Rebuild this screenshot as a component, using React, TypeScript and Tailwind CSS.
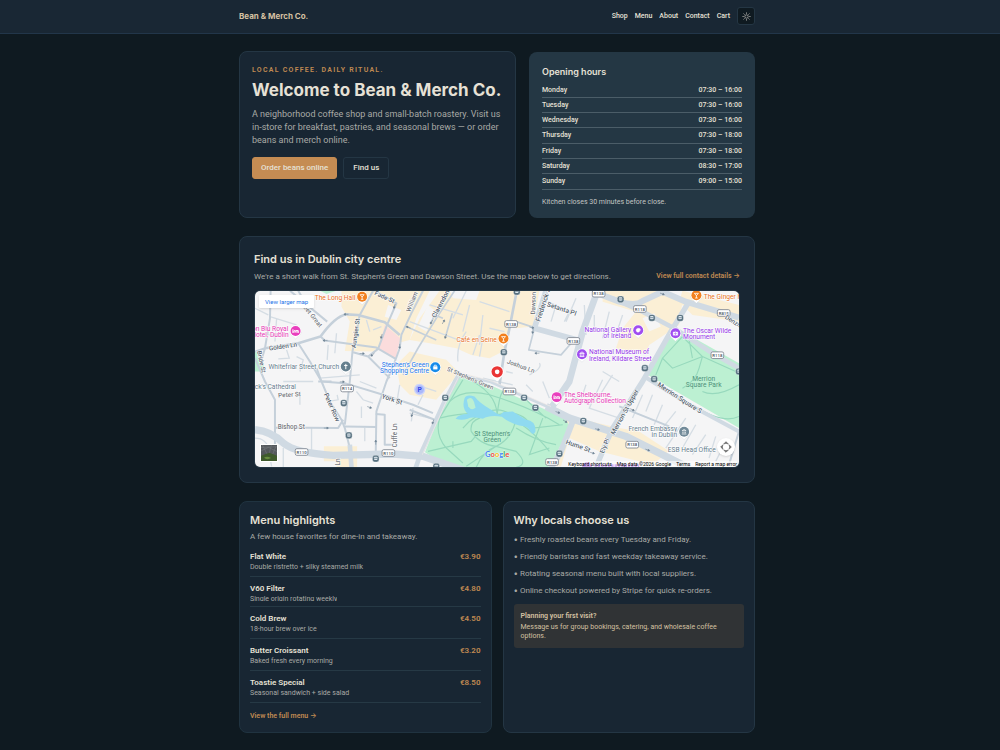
import * as React from "react";

const NAV = ["Shop", "Menu", "About", "Contact", "Cart"];

const HOURS = [
  ["Monday", "07:30 – 16:00"],
  ["Tuesday", "07:30 – 16:00"],
  ["Wednesday", "07:30 – 16:00"],
  ["Thursday", "07:30 – 18:00"],
  ["Friday", "07:30 – 18:00"],
  ["Saturday", "08:30 – 17:00"],
  ["Sunday", "09:00 – 15:00"],
];

const MENU = [
  { name: "Flat White", note: "Double ristretto + silky steamed milk", price: "€3.90" },
  { name: "V60 Filter", note: "Single origin rotating weekly", price: "€4.80", short: true },
  { name: "Cold Brew", note: "18-hour brew over ice", price: "€4.50" },
  { name: "Butter Croissant", note: "Baked fresh every morning", price: "€3.20" },
  { name: "Toastie Special", note: "Seasonal sandwich + side salad", price: "€8.50" },
];

const REASONS = [
  "Freshly roasted beans every Tuesday and Friday.",
  "Friendly baristas and fast weekday takeaway service.",
  "Rotating seasonal menu built with local suppliers.",
  "Online checkout powered by Stripe for quick re-orders.",
];

const SHIELDS: [number, number, string][] = [
  [292, 311, "R114"],
  [155, 502, "R110"],
  [416, 505, "R110"],
  [785, 117, "R138"],
  [972, 168, "R138"],
  [1048, 26, "R138"],
  [1172, 72, "R118"],
  [1424, 84, "R815"],
  [1405, 211, "R118"],
  [780, 320, "R138"],
  [908, 532, "R138"],
  [1149, 480, "R138"],
];

const STOPS = [
  [282, 355], [297, 452], [378, 522], [802, 20], [763, 202], [1114, 43], [1208, 99], [1293, 99],
  [1187, 250], [1215, 283], [587, 339], [824, 339], [858, 369], [1002, 409], [930, 507], [560, 546], [1470, 260],
];

const ARROWS = [
  [288, 88, 180], [225, 167, 180], [338, 206, 0], [434, 65, 105], [395, 155, 105], [450, 185, 90],
  [475, 127, 200], [582, 110, 300], [588, 155, 110], [545, 112, 120], [278, 291, 0], [360, 368, 20],
  [230, 430, 0], [378, 472, 270], [368, 210, 140], [848, 128, 10], [850, 140, 100], [862, 205, 180],
  [926, 383, 20], [948, 410, 30], [1045, 434, 15], [1150, 375, 25], [1030, 505, 15], [1196, 496, 20],
  [550, 412, 110], [487, 390, 110], [1240, 27, 20],
];

type PinProps = { x: number; y: number; color: string; children?: React.ReactNode };

function Pin({ x, y, color, children }: PinProps) {
  return (
    <g transform={`translate(${x} ${y})`}>
      <path d="M-17 3 C-16 13 -6 17 0 24 C6 17 16 13 17 3Z" fill="#fff" stroke="#c9ced4" />
      <circle r="17" fill="#fff" />
      <circle r="15" fill={color} />
      <g fill="none" stroke="#fff" strokeWidth="2.4">
        {children}
      </g>
    </g>
  );
}

const cocktail = <path d="M-6 -6 H6 L0 1Z M0 0 V8 M-4 8 H4" />;
const bed = <path d="M-8 -5 V6 M-8 3 H8 V6 M8 3 V-1 H0 V2 M-5 -1 H-2" strokeWidth="3" />;

function DublinMap() {
  return (
    <svg
      viewBox="15 17 1455 531"
      preserveAspectRatio="xMidYMid slice"
      className="block h-full w-full"
      role="img"
      aria-label="Map of St. Stephen's Green"
    >
      <rect x="0" y="0" width="1500" height="570" fill="#f5f5f6" />

      {/* shopping areas */}
      <g fill="#fbefd5">
        <path d="M275 17 H540 L500 100 L480 165 L380 190 L372 200 L285 198 L300 110 L275 65Z" />
        <path d="M570 17 H870 L850 125 L800 130 L790 100 L760 200 L720 220 L665 210 L620 190 L540 175 L480 165 L510 100Z" />
        <path d="M480 200 L590 225 L620 255 L615 280 L560 345 L480 330 L450 300 L440 240Z" />
        <path d="M1060 17 H1250 L1300 50 L1290 120 L1200 180 L1190 205 L1100 190 L1120 130 L1160 80 L1060 50Z" />
        <path d="M1300 17 L1470 60 V110 L1330 90 L1290 50Z" />
        <path d="M925 370 L960 395 L1110 430 L1170 440 L1260 500 L1210 540 L1050 500 L960 460 L935 545 H920 L960 425Z" />
        <path d="M222 485 H322 V548 H260 V530 H222Z" />
      </g>
      <g fill="#f5f5f6">
        <path d="M600 17 H690 L680 45 L610 40Z M415 60 L455 75 L440 105 L405 95Z M535 60 L560 80 L530 140 L505 125Z M640 220 h70 v40 h-60z" />
        <path d="M1180 100 L1215 85 L1235 125 L1200 140Z" />
      </g>
      <path d="M405 120 L452 160 L438 222 L387 190Z" fill="#fbdcdc" />

      {/* parks */}
      <g fill="#bcf0d2">
        <path d="M612 285 Q622 272 645 273 L720 300 L945 400 L962 425 L925 500 L895 550 H600 L526 503Z" />
        <path d="M1265 145 L1300 140 L1470 235 V430 L1195 270Z" />
        <path d="M15 200 h12 l20 60 h-32z M210 17 h50 l-30 10z" />
      </g>
      <g fill="none" stroke="#97d9bd" strokeWidth="3.5">
        <path d="M640 285 L570 400 Q555 450 590 490 L640 535 M650 280 Q740 320 743 390 Q750 330 760 320 M570 400 Q640 380 743 388 Q820 400 900 500" />
        <path d="M690 400 Q740 350 800 400 Q790 460 740 485 Q690 480 665 440 Q660 410 690 400Z M640 430 Q690 370 743 390 Q820 370 850 430 L940 420 M535 500 L665 470 L690 440 M800 430 Q860 470 920 480" />
        <path d="M600 350 Q640 310 720 330 Q850 370 930 420 M650 545 L740 485 L800 500 Q840 540 800 548 M680 548 Q700 500 740 485 M880 400 L840 510 L900 490 M830 345 L890 400 M610 470 V490" />
        <path d="M1300 155 L1240 220 L1270 250 L1360 215 L1300 155 M1360 215 L1350 250 Q1340 290 1300 310 M1360 215 L1460 260 M1240 220 L1220 270 M1330 360 Q1420 420 1470 395 M1360 320 Q1400 340 1470 300 M1320 165 L1330 220" />
      </g>
      <path
        d="M645 340 Q650 328 675 335 Q690 355 725 375 L742 386 L752 390 L762 382 L790 380 L830 405 Q860 408 858 440 Q852 455 842 440 Q840 425 810 422 Q780 415 757 396 Q720 390 700 402 Q665 395 655 402 Q635 408 618 402 Q628 388 655 388 Q635 370 645 340Z"
        fill="#8fdaf0"
      />
      <path d="M652 345 q14 -14 22 8 l4 16 q-12 10 -22 -4z" fill="#bcf0d2" />

      {/* lanes */}
      <g fill="none" stroke="#d5dde4" strokeWidth="4">
        <path d="M15 70 L55 90 M60 95 L140 120 M15 150 L80 150 M80 100 L75 170 M110 195 L118 220 L85 222 M140 215 L160 225 L150 260 M260 145 L255 205 M235 180 L232 225 M350 105 L360 140 M395 125 L370 135" />
        <path d="M650 17 L610 100 M690 50 L780 80 M660 60 L640 140 M700 90 L690 180 M720 130 L765 140 M670 210 L690 150 M690 215 L700 160 M625 230 Q620 180 650 140 M480 110 L640 170 M540 60 L640 90" />
        <path d="M895 50 L960 80 L945 110 M920 60 L905 110 M980 40 L950 110 M1005 60 L1010 150 M870 235 Q880 250 840 270 M1080 80 L1060 160 M1120 90 L1100 150 M1035 90 V130" />
        <path d="M960 330 L1020 360 M1010 300 L990 360 M1040 350 L1090 270 M1060 260 L1110 290 M1060 285 L1020 370 L1110 400 M1180 330 L1150 400 M1210 330 L1190 380 M1240 360 L1215 420 M1280 380 L1240 430 M1310 400 L1250 490 M1340 420 L1300 490 M1370 450 L1330 510 M1400 455 L1380 520 M1430 470 L1400 530" />
        <path d="M100 290 H190 M150 320 V360 M210 280 L330 270 M330 290 L380 310 M320 320 L340 345 L370 355 M335 365 V400 M235 350 L265 345 L262 330 M185 430 V500 M345 430 V470 M60 520 L65 545 M100 490 V548 M15 460 Q50 460 60 500" />
        <path d="M450 300 L440 360 M480 385 L540 400 M490 370 L485 410 M500 300 L560 320 M520 330 L505 360 M700 280 L790 300 M770 260 L790 265 M830 300 L850 320 M880 290 L900 340" />
      </g>

      {/* streets */}
      <g fill="none" stroke="#c5d0da" strokeWidth="6" strokeLinejoin="round">
        <path d="M62 17 L60 100 L45 190 L15 200 M45 190 L30 240 M120 17 L232 110 M145 17 L170 60" />
        <path d="M45 190 L145 175 L212 155 Q255 95 290 88 L325 90 L405 112 L450 150" strokeWidth="8" />
        <path d="M212 155 L225 167 L380 188 L438 222 M370 17 L330 90 L308 200 L300 290 L285 420" />
        <path d="M375 17 L440 55 L412 120 L385 192 L355 215 L310 202 M355 215 L420 280 M520 17 L485 85 L455 150 L450 190 L430 245 L410 290 L380 380 L378 505" />
        <path d="M145 175 L180 230 L215 290 L240 350 L275 405 L285 430 L300 490" />
        <path d="M615 17 L560 100 L505 190 L460 270 M470 125 L560 165 M545 112 L555 90 L580 100 M608 85 L588 155" strokeWidth="5" />
        <path d="M15 220 L45 290 L75 345 V490 M75 428 L265 430 L280 405 M285 425 L380 427 M215 290 L285 295 L400 330 L490 360 L550 385 M378 388 L405 390 V480 L430 480" />
        <path d="M855 130 L838 195 L935 210 L970 170 M800 110 L855 128" strokeWidth="5" />
        <path d="M802 17 L780 130 L765 200 L750 300" strokeWidth="8" />
        <path d="M480 375 L555 405 M1110 365 L1260 425 M1470 440 L1440 540 M245 290 L205 290 M215 290 L200 250" />
      </g>
      <g fill="none" stroke="#d0dae3" strokeLinejoin="round">
        <path d="M890 17 L855 130 L1000 170" strokeWidth="17" />
        <path d="M1045 17 L1000 140 L960 290 L905 370" strokeWidth="20" />
        <path d="M1045 25 L1110 50 Q1160 65 1180 48 L1240 20 L1310 50 L1470 98" strokeWidth="18" />
        <path d="M1090 40 L1180 80 L1275 130 L1390 205 L1470 250" strokeWidth="14" />
        <path d="M1320 50 L1265 140 L1180 290 L1090 430 L1040 548" strokeWidth="16" />
        <path d="M1185 275 L1330 365 L1470 440" strokeWidth="12" />
        <path d="M15 435 Q65 440 100 475 Q135 505 250 512 L430 508 L520 515 L650 560" strokeWidth="22" />
        <path d="M300 480 L305 548" strokeWidth="14" />
        <path d="M625 275 L585 350 L510 515 L498 550" strokeWidth="14" />
        <path d="M890 365 L960 400 L1130 455 L1320 550" strokeWidth="22" />
        <path d="M970 410 L935 500 L905 550" strokeWidth="18" />
        <path d="M620 268 L720 290 L905 370" strokeWidth="9" />
      </g>
      <path d="M628 275 L590 350 L518 510 M630 262 L730 290 L905 365" fill="none" stroke="#f3ece9" strokeWidth="2" />

      {ARROWS.map(([x, y, r], i) => (
        <path key={i} d="M-8 0 H4 M1 -3 L6 0 L1 3Z" transform={`translate(${x} ${y}) rotate(${r})`} fill="#6d8293" stroke="#6d8293" strokeWidth="1.6" />
      ))}

      {STOPS.map(([x, y], i) => (
        <g key={i} transform={`translate(${x} ${y})`}>
          <rect x="-10" y="-10" width="20" height="20" rx="7" fill="#56707f" stroke="#fff" strokeWidth="1" />
          <rect x="-5" y="-6" width="10" height="10" rx="2" fill="#dfe8ef" />
          <path d="M-5 -1 H5 M-3 6 V4 M3 6 V4" stroke="#56707f" strokeWidth="2" />
        </g>
      ))}

      {SHIELDS.map(([x, y, name], i) => (
        <g key={i} transform={`translate(${x} ${y})`}>
          <rect x="-19" y="-10" width="38" height="20" rx="5" fill="#fff" stroke="#7b838d" strokeWidth="2.5" />
          <text y="5" textAnchor="middle" fontSize="13" fontWeight="500" fill="#4b545f">{name}</text>
        </g>
      ))}

      {/* street names */}
      <g fontSize="19" fontWeight="500" fill="#55636f" stroke="#fff" strokeWidth="3" paintOrder="stroke" textAnchor="middle">
        <text transform="translate(184 98) rotate(51)" fill="#75797e">eet Great</text>
        <text transform="translate(100 191) rotate(-8)">Golden Ln</text>
        <text transform="translate(28 232) rotate(78)">Bride St</text>
        <text transform="translate(324 146) rotate(-82)">Aungier St</text>
        <text transform="translate(402 42) rotate(25)">Fade St</text>
        <text transform="translate(496 45) rotate(-68)" fill="#75797e">William S</text>
        <text transform="translate(583 52) rotate(-62)" fontSize="20">Clarendon S</text>
        <text transform="translate(119 336) rotate(-4)" fill="#75797e">Peter St</text>
        <text transform="translate(240 370) rotate(66)" fontSize="20">Peter Row</text>
        <text transform="translate(425 350) rotate(18)" fontSize="20">York St</text>
        <text transform="translate(124 434)" fill="#75797e">Bishop St</text>
        <text transform="translate(441 452) rotate(-90)" fill="#75797e">Cuffe Ln</text>
        <text transform="translate(272 532) rotate(-90)" fill="#75797e">Ln</text>
        <text transform="translate(858 55) rotate(-88)" fill="#75797e">Dawson</text>
        <text transform="translate(889 58) rotate(-72)" fontSize="21">Frederick St</text>
        <text transform="translate(935 78) rotate(18)" fontSize="20">Setanta Pl</text>
        <text transform="translate(812 250) rotate(20)" fill="#75797e">Joshua Ln</text>
        <text transform="translate(660 286) rotate(23)" fill="#75797e" fontSize="18">St Stephen's Green</text>
        <text transform="translate(1455 118) rotate(32)">Denzille</text>
        <text transform="translate(1288 345) rotate(33)" fontSize="20">Merrion Square S</text>
        <text transform="translate(1132 385) rotate(-61)" fontSize="20">Merrion St Upper</text>
        <text transform="translate(1072 486) rotate(-68)">Ely Pl</text>
        <text transform="translate(984 490) rotate(20)" fontSize="20">Hume St</text>
      </g>

      {/* places */}
      <g fontSize="20" stroke="#fff" strokeWidth="3" paintOrder="stroke">
        <g fill="#e8711c">
          <text x="317" y="44" textAnchor="end">The Long Hall</text>
          <text x="742" y="171" textAnchor="end">Café en Seine</text>
          <text x="1364" y="41">The Ginger Man</text>
        </g>
        <g fill="#e535b5">
          <text x="115" y="138" textAnchor="end">on Blu Royal</text>
          <text x="116" y="156" textAnchor="end">Hotel, Dublin</text>
          <text x="944" y="336">The Shelbourne,</text>
          <text x="944" y="355">Autograph Collection</text>
        </g>
        <g fill="#9334e6">
          <text x="1146" y="140" textAnchor="end">National Gallery</text>
          <text x="1146" y="159" textAnchor="end">of Ireland</text>
          <text x="1019" y="208">National Museum of</text>
          <text x="1019" y="227">Ireland, Kildare Street</text>
          <text x="1302" y="143">The Oscar Wilde</text>
          <text x="1302" y="162">Monument</text>
        </g>
        <g fill="#1a73e8">
          <text x="538" y="247" textAnchor="end">Stephen's Green</text>
          <text x="538" y="266" textAnchor="end">Shopping Centre</text>
        </g>
        <g fill="#667d8d">
          <text x="268" y="253" textAnchor="end">Whitefriar Street Church</text>
          <text x="138" y="313" textAnchor="end">St Patrick's Cathedral</text>
          <text x="1284" y="439" textAnchor="end">French Embassy</text>
          <text x="1284" y="458" textAnchor="end">in Dublin</text>
          <text x="1256" y="502">ESB Head Office</text>
        </g>
        <g fill="#4e917a" stroke="#bcf0d2" textAnchor="middle">
          <text x="728" y="453">St Stephen's</text>
          <text x="728" y="472">Green</text>
          <text x="1364" y="289">Merrion</text>
          <text x="1364" y="308">Square Park</text>
        </g>
      </g>

      <Pin x={337} y={35} color="#f2801e">{cocktail}</Pin>
      <Pin x={762} y={161} color="#f2801e">{cocktail}</Pin>
      <Pin x={1342} y={31} color="#f2801e">{cocktail}</Pin>
      <Pin x={137} y={138} color="#e93fbd">{bed}</Pin>
      <Pin x={922} y={337} color="#e93fbd">{bed}</Pin>
      <Pin x={1167} y={136} color="#a04df0"><path d="M0 -6 a6 6 0 1 0 4 10 q0 -4 3 -4 a6 6 0 0 0 -7 -6z" fill="#fff" strokeWidth="1" /></Pin>
      <Pin x={998} y={208} color="#a04df0"><path d="M-7 -2 L0 -7 L7 -2Z M-5 0 V6 M0 0 V6 M5 0 V6 M-7 7 H7" /></Pin>
      <Pin x={1279} y={145} color="#a04df0"><path d="M-7 -4 H7 V6 H-7Z M-2 -6 H2" fill="#fff" strokeWidth="1" /><circle cy="1" r="2" stroke="#a04df0" /></Pin>
      <Pin x={557} y={247} color="#168bea"><path d="M-6 -2 H6 V6 H-6Z" fill="#fff" strokeWidth="1" /><path d="M-3 -2 V-6 H3 V-2" /></Pin>
      <Pin x={288} y={245} color="#66808f"><path d="M0 -8 V8 M-5 -3 H5" strokeWidth="3" /></Pin>
      <Pin x={1305} y={441} color="#718a99"><path d="M-6 -3 H6 L0 -7Z M-4 0 V5 M0 0 V5 M4 0 V5 M-7 7 H7" strokeWidth="2" /></Pin>
      <circle cx="510" cy="314" r="17" fill="#ccd4fb" />
      <circle cx="510" cy="314" r="13" fill="#aab8fb" />
      <text x="510" y="321" textAnchor="middle" fontSize="20" fontWeight="700" fill="#3347e8">P</text>

      <path d="M725 262 Q727 276 743 290 Q759 276 762 262Z" fill="#fff" />
      <circle cx="743" cy="261" r="20" fill="#fff" />
      <circle cx="743" cy="261" r="17" fill="#ea3535" />
      <circle cx="743" cy="261" r="7" fill="#fff" />

      <path d="M998 548 a15 15 0 0 1 30 0z" fill="#8f35e6" />
      <path d="M1036 543 H1170" stroke="#8f35e6" strokeWidth="9" strokeDasharray="7 3" />

      <text x="743" y="518" textAnchor="middle" fontSize="23" fontWeight="700" stroke="#fff" strokeWidth="2" paintOrder="stroke" fontFamily="Lato, sans-serif">
        <tspan fill="#4285f4">G</tspan>
        <tspan fill="#ea4335">o</tspan>
        <tspan fill="#fbbc05">o</tspan>
        <tspan fill="#4285f4">g</tspan>
        <tspan fill="#34a853">l</tspan>
        <tspan fill="#ea4335">e</tspan>
      </text>
    </svg>
  );
}

function MapFrame() {
  return (
    <div className="relative mt-[7px] h-[178px] overflow-hidden rounded-md border border-[#243644]">
      <DublinMap />
      <a href="#map" className="absolute top-[4px] left-[4px] rounded-[1px] bg-white px-[6px] py-[2px] text-[6px] leading-[9px] text-[#1a73e8] shadow-sm">
        View larger map
      </a>
      <button aria-label="Show satellite imagery" className="absolute bottom-[5px] left-[5px] h-[18px] w-[18px] overflow-hidden border border-white">
        <svg viewBox="0 0 54 54" className="h-full w-full">
          <rect width="54" height="54" fill="#55585c" />
          <path d="M0 20 L25 8 L54 22 M5 0 L20 30 M35 0 L28 28 M50 5 L40 30 M0 8 L54 6" stroke="#74787c" strokeWidth="2" fill="none" />
          <path d="M0 36 L28 26 L54 36 V54 H0Z" fill="#3f5a2c" />
          <path d="M10 43 Q20 36 34 44 Q20 52 10 43Z" fill="#6a8f3f" />
        </svg>
      </button>
      <button aria-label="Map camera controls" className="absolute right-[4px] bottom-[11px] h-[18px] w-[18px] rounded-full bg-white shadow">
        <svg viewBox="0 0 54 54" className="h-full w-full" fill="#666" stroke="#666" strokeWidth="2">
          <path d="M20 18 L27 11 L34 18 L27 16Z M20 36 L27 43 L34 36 L27 38Z M18 20 L11 27 L18 34 L16 27Z M36 20 L43 27 L36 34 L38 27Z" />
        </svg>
      </button>
      <div className="absolute right-[2px] bottom-0 flex gap-[5px] bg-white/60 text-[5px] leading-[6px] whitespace-nowrap text-black">
        <span>Keyboard shortcuts</span>
        <span>Map data ©2026 Google</span>
        <a href="#terms">Terms</a>
        <a href="#report">Report a map error</a>
      </div>
    </div>
  );
}

function SunIcon() {
  return (
    <svg viewBox="0 0 24 24" className="h-[9px] w-[9px]" fill="none" stroke="#c9c5bd" strokeWidth="1.8">
      <circle cx="12" cy="12" r="4.5" />
      <path d="M12 1 V5 M12 19 V23 M1 12 H5 M19 12 H23 M4 4 L7 7 M17 17 L20 20 M20 4 L17 7 M4 20 L7 17" />
    </svg>
  );
}

function Arrow() {
  return <span className="font-[Inter,sans-serif] leading-none">→</span>;
}

export default function App() {
  return (
    <div className="min-h-screen bg-[#0f1a21] font-[Roboto,sans-serif] text-[#e6e1d6]">
      <header className="border-b border-[#22364a] bg-[#192734] pr-[6px]">
        <div className="mx-auto flex max-w-[516px] items-center justify-between pt-[7px] pb-[8px]">
          <a href="#home" className="font-[Inter,sans-serif] text-[8px] leading-[18px] font-bold text-[#d5c1a2]">Bean &amp; Merch Co.</a>
          <nav className="flex items-center gap-[7px] text-[7px] font-medium">
            {NAV.map((item) => (
              <a key={item} href={"#" + item.toLowerCase()}>{item}</a>
            ))}
            <button aria-label="Toggle theme" className="flex h-[18px] w-[18px] items-center justify-center rounded-[3px] border border-[#243644] bg-[#0f1a21]">
              <SunIcon />
            </button>
          </nav>
        </div>
      </header>

      <main className="pt-[17px] pr-[6px] pb-[17px]">
        <div className="mx-auto flex max-w-[516px] flex-col gap-[18px]">
          <section className="grid grid-cols-[277fr_226fr] items-center gap-[13px]">
            <div className="h-full rounded-lg border border-[#243644] bg-[#182633] px-[12px] pt-[13px] pb-[38px]">
              <p className="text-[7px] leading-[10px] font-semibold tracking-[0.18em] text-[#c08a52] uppercase">Local coffee. Daily ritual.</p>
              <h1 className="mt-[4px] font-[Inter,sans-serif] text-[17px] leading-[22px] font-bold">Welcome to Bean &amp; Merch Co.</h1>
              <p className="mt-[7px] text-[9px] leading-[13px] text-[#a9aaa6]">
                A neighborhood coffee shop and small-batch roastery. Visit us in-store for breakfast, pastries, and seasonal brews — or order beans and merch online.
              </p>
              <div className="mt-[10px] flex gap-[6px] text-[8px] leading-[20px] font-medium">
                <a href="#shop" className="rounded-[3px] border border-[#c58c53] bg-[#c58c53] px-[8px]">Order beans online</a>
                <a href="#find" className="rounded-[3px] border border-[#243644] px-[9px]">Find us</a>
              </div>
            </div>
            <div className="rounded-lg bg-[#243744] px-[13px] pt-[13px] pb-[11px]">
              <h2 className="font-[Inter,sans-serif] text-[9px] leading-[14px] font-semibold">Opening hours</h2>
              <table className="mt-[4px] h-[107px] w-full text-[7px] leading-[10px] font-medium">
                <tbody>
                  {HOURS.map(([day, time]) => (
                    <tr key={day} className="border-b border-[#4b5d68]">
                      <th scope="row" className="text-left font-medium">{day}</th>
                      <td className="text-right">{time}</td>
                    </tr>
                  ))}
                </tbody>
              </table>
              <p className="mt-[7px] text-[7px] leading-[10px] text-[#c3c5c3]">Kitchen closes 30 minutes before close.</p>
            </div>
          </section>

          <section id="find" className="rounded-lg border border-[#243644] bg-[#182633] p-[14px]">
            <h2 className="font-[Inter,sans-serif] text-[11px] leading-[16px] font-semibold">Find us in Dublin city centre</h2>
            <div className="mt-[2px] flex items-center justify-between">
              <p className="text-[8px] leading-[13px] text-[#a9aaa6]">
                We're a short walk from St. Stephen's Green and Dawson Street. Use the map below to get directions.
              </p>
              <a href="#contact" className="text-[7px] leading-[14px] font-semibold text-[#c08a52]">
                View full contact details <Arrow />
              </a>
            </div>
            <MapFrame />
          </section>

          <section className="grid grid-cols-2 gap-[11px]">
            <div className="rounded-lg border border-[#203340] bg-[#182633] px-[10px] pt-[10px] pb-[10px]">
              <h2 className="font-[Inter,sans-serif] text-[11px] leading-[16px] font-semibold">Menu highlights</h2>
              <p className="mt-[3px] text-[8px] leading-[12px] text-[#a9aaa6]">A few house favorites for dine-in and takeaway.</p>
              <ul className="mt-[2px]">
                {MENU.map((item) => (
                  <li key={item.name} className="flex justify-between border-b border-[#263945] pt-[6px] pb-[5px] text-[8px]">
                    <div>
                      <h3 className="leading-[11px] font-semibold">{item.name}</h3>
                      <p className={item.short ? "h-[7px] overflow-hidden text-[7px] leading-[11px] text-[#a9aaa6]" : "h-[9px] text-[7px] leading-[11px] text-[#a9aaa6]"}>
                        {item.note}
                      </p>
                    </div>
                    <span className="leading-[11px] font-semibold text-[#c08a52]">{item.price}</span>
                  </li>
                ))}
              </ul>
              <a href="#menu" className="mt-[8px] block text-[7px] leading-[11px] font-semibold text-[#c08a52]">
                View the full menu <Arrow />
              </a>
            </div>
            <div className="rounded-lg border border-[#243644] bg-[#182633] px-[10px] pt-[10px]">
              <h2 className="font-[Inter,sans-serif] text-[11px] leading-[16px] font-semibold">Why locals choose us</h2>
              <ul className="mt-[6px] flex flex-col gap-[5px] text-[8px] leading-[12px] text-[#a9aaa6]">
                {REASONS.map((reason) => (
                  <li key={reason}><span className="font-[Inter,sans-serif] leading-none">•</span> {reason}</li>
                ))}
              </ul>
              <div className="mt-[7px] rounded-[3px] bg-[#303335] px-[7px] pt-[7px] pb-[7px] text-[#d5c1a2]">
                <p className="text-[7px] leading-[10px] font-semibold">Planning your first visit?</p>
                <p className="mt-[2px] text-[7px] leading-[9px]">Message us for group bookings, catering, and wholesale coffee options.</p>
              </div>
            </div>
          </section>
        </div>
      </main>
    </div>
  );
}
